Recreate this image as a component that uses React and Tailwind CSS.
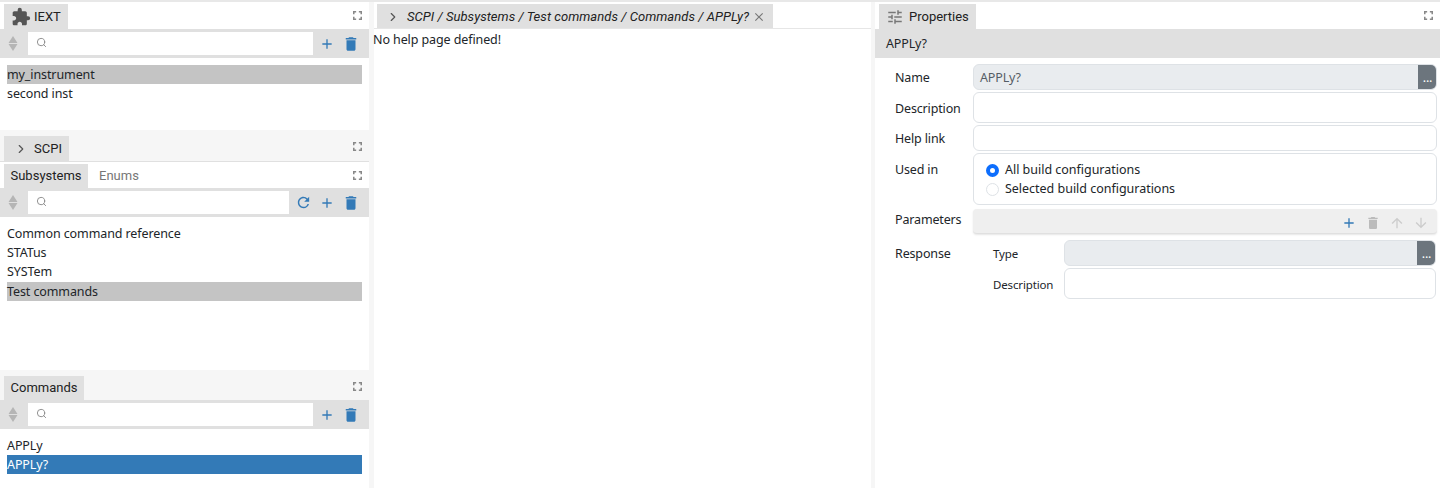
import { MdAdd, MdDelete, MdRefresh, MdTune, MdArrowUpward, MdArrowDownward, MdClose, MdExtension } from "react-icons/md";
import { LuChevronRight, LuSearch } from "react-icons/lu";

const Maximize = () => (
    <svg className="w-[9px] h-[9px] text-[#888]" viewBox="0 0 10 10" fill="none" stroke="currentColor" strokeWidth="1.7">
        <path d="M.85 3.5V.85H3.5M6.5.85h2.65V3.5M9.15 6.5v2.65H6.5M3.5 9.15H.85V6.5" />
    </svg>
);

const SortArrows = () => (
    <svg className="w-[10px] h-[15px] ml-2 mr-[10px] text-[#b5b5b5]" viewBox="0 0 10 15" fill="currentColor">
        <path d="M5 0l4.5 7H.5zM.5 8h9L5 15z" />
    </svg>
);

const Tab = ({ children, className = "" }) => (
    <div className={`flex items-center bg-[#e0e0e0] text-[13px] text-[#222] font-['Roboto',sans-serif] ${className}`}>
        {children}
    </div>
);

const Strip = ({ tab, className = "", maxClass = "" }) => (
    <div className={`flex items-end justify-between pl-1 pr-[7px] ${className}`}>
        {tab}
        <div className={`self-center ${maxClass}`}><Maximize /></div>
    </div>
);

const Toolbar = ({ refresh }) => (
    <div className="flex items-center h-[29px] bg-[#e0e0e0]">
        <SortArrows />
        <div className="flex-1 flex items-center h-[23px] bg-white pl-2 text-[#888]">
            <LuSearch className="w-[11px] h-[11px] mb-[3px]" />
        </div>
        <div className="flex items-center pl-[6px] pr-[9px] text-[#337ab7]">
            {refresh && <MdRefresh className="w-[17px] h-[17px] mr-[7px]" />}
            <MdAdd className="w-[16px] h-[16px]" />
            <MdDelete className="w-[18px] h-[18px] ml-[7px]" />
        </div>
    </div>
);

const Row = ({ children, state, className = "" }) => (
    <div className={`h-[19px] leading-[19px] whitespace-nowrap ${state === "active" ? "bg-[#337ab7] text-white" : state === "selected" ? "bg-[#c4c4c4]" : ""} ${className}`}>
        {children}
    </div>
);

const RowList = ({ items }) => (
    <div className="pl-[7px] pr-[7px] pt-[7px] tracking-[-0.1px]">
        {items.map(([label, state, cls]) => <Row key={label} state={state} className={cls}>{label}</Row>)}
    </div>
);

const Field = ({ label, labelClass, children, className = "" }) => (
    <div className={`flex ${className}`}>
        <div className={`w-[98px] shrink-0 pl-5 leading-[19px] ${labelClass}`}>{label}</div>
        <div className="flex-1 min-w-0">{children}</div>
    </div>
);

const Input = ({ className = "", children }) => (
    <div className={`border border-[#dee2e6] rounded-[6px] bg-white ${className}`}>{children}</div>
);

const Picker = ({ value, className = "" }) => (
    <div className={`flex items-stretch h-[26px] rounded-[6px] border border-[#dee2e6] bg-[#e9ecef] overflow-hidden ${className}`}>
        <div className="flex-1 px-[6px] leading-[25px] text-[#555d66]">{value}</div>
        <div className="w-[19px] -my-px -mr-px bg-[#6c757d] text-white leading-[28px] text-center">...</div>
    </div>
);

export default function App() {
    return (
        <div className="flex flex-col w-[1440px] h-[488px] overflow-hidden bg-white text-[#212529] text-[12.5px] tracking-[-0.15px] font-['Noto_Sans','Open_Sans',sans-serif]">
            <div className="h-[2px] shrink-0 bg-[#e8e8e8]" />
            <div className="flex flex-1 min-h-0">
                {/* left column */}
                <div className="flex flex-col w-[369px] shrink-0">
                    <div className="h-[128px] shrink-0">
                        <Strip className="h-[27px]" tab={
                            <Tab className="w-[64px] h-[25px] pt-px tracking-normal">
                                <MdExtension className="w-[20px] h-[20px] ml-[7px] mb-px mr-[3px] text-[#555]" />
                                IEXT
                            </Tab>
                        } />
                        <Toolbar />
                        <RowList items={[["my_instrument", "selected"], ["second inst"]]} />
                    </div>
                    <div className="flex-1 min-h-0">
                        <Strip className="h-[32px] bg-[#f6f6f6] border-b border-[#e0e0e0]" maxClass="mt-[2px]" tab={
                            <Tab className="w-[65px] h-[25px] tracking-normal">
                                <LuChevronRight className="w-[14px] h-[14px] ml-[10px] mr-[6px] text-[#555]" />
                                SCPI
                            </Tab>
                        } />
                        <Strip className="h-[26px]" tab={
                            <div className="flex h-[24px] text-[13px] tracking-normal font-['Roboto',sans-serif]">
                                <Tab className="w-[84px] justify-center">Subsystems</Tab>
                                <div className="flex items-center pl-[11px] text-[#777]">Enums</div>
                            </div>
                        } />
                        <Toolbar refresh />
                        <RowList items={[["Common command reference"], ["STATus"], ["SYSTem"], ["Test commands", "selected", "mt-px"]]} />
                    </div>
                    <div className="h-[118px] shrink-0">
                        <Strip className="h-[30px] bg-[#f6f6f6]" maxClass="mt-[2px]" tab={<Tab className="w-[80px] h-[24px] justify-center tracking-normal">Commands</Tab>} />
                        <Toolbar />
                        <RowList items={[["APPLy"], ["APPLy?", "active"]]} />
                    </div>
                </div>
                <div className="w-[5px] shrink-0 bg-[#f6f6f6]" />
                {/* middle column */}
                <div className="flex flex-col w-[497px] shrink-0">
                    <div className="flex items-end h-[27px] pl-[3px] border-b border-[#e6e6e6]">
                        <Tab className="w-[396px] h-[24px] pt-px italic tracking-[0.04px]">
                            <LuChevronRight className="w-[14px] h-[14px] ml-[9px] mr-[7px] text-[#555]" />
                            SCPI / Subsystems / Test commands / Commands / APPLy?
                            <MdClose className="w-[14px] h-[14px] ml-[3px] text-[#777]" />
                        </Tab>
                    </div>
                    <div className="pt-px leading-[19px] -ml-px tracking-[-0.1px]">No help page defined!</div>
                </div>
                <div className="w-[4px] shrink-0 bg-[#f6f6f6]" />
                {/* right column */}
                <div className="flex-1 min-w-0">
                    <Strip className="h-[27px]" tab={
                        <Tab className="w-[97px] h-[25px] pt-px tracking-normal">
                            <MdTune className="w-[18px] h-[18px] ml-[7px] mb-px mr-[5px] text-[#777]" />
                            Properties
                        </Tab>
                    } />
                    <div className="h-[29px] bg-[#e0e0e0] pl-[11px] leading-[29px]">APPLy?</div>
                    <div className="flex flex-col pt-[6px] pr-[3px]">
                        <Field label="Name" labelClass="pt-[4px]"><Picker value="APPLy?" /></Field>
                        <Field label="Description" labelClass="pt-[7px]" className="mt-[2px]"><Input className="h-[31px]" /></Field>
                        <Field label="Help link" labelClass="pt-[4px]" className="mt-[2px]"><Input className="h-[26px]" /></Field>
                        <Field label="Used in" labelClass="pt-[7px]" className="mt-[2px]">
                            <Input className="h-[52px] pl-3 pt-[6px] tracking-[-0.02px]">
                                <label className="flex items-center h-[19px] pt-px">
                                    <span className="w-[13px] h-[13px] mr-[6px] rounded-full border-[4px] border-[#0d6efd] bg-white" />
                                    All build configurations
                                </label>
                                <label className="flex items-center h-[19px] pt-px">
                                    <span className="w-[13px] h-[13px] mr-[6px] rounded-full border border-[#dee2e6] bg-white" />
                                    Selected build configurations
                                </label>
                            </Input>
                        </Field>
                        <Field label="Parameters" labelClass="pt-px" className="mt-[4px]">
                            <div className="flex items-end justify-end gap-[8px] h-[25px] pr-[8px] pb-[2px] rounded-[4px] bg-[#efefef] border-b border-[#e0e0e0] shadow-[0_1px_2px_rgba(0,0,0,0.1)]">
                                <MdAdd className="w-[16px] h-[16px] text-[#337ab7]" />
                                <MdDelete className="w-[16px] h-[16px] text-[#bbb]" />
                                <MdArrowUpward className="w-[16px] h-[16px] text-[#ccc]" />
                                <MdArrowDownward className="w-[16px] h-[16px] text-[#ccc]" />
                            </div>
                        </Field>
                        <Field label="Response" labelClass="pt-[4px]" className="mt-[6px]">
                            <div className="flex flex-col gap-[2px] pr-px">
                                <div className="flex items-center">
                                    <div className="w-[91px] pl-5 pt-[2px] text-[11.5px] shrink-0">Type</div>
                                    <Picker className="flex-1" />
                                </div>
                                <div className="flex items-center">
                                    <div className="w-[91px] pl-5 pt-[2px] text-[11.5px] shrink-0">Description</div>
                                    <Input className="flex-1 h-[31px]" />
                                </div>
                            </div>
                        </Field>
                    </div>
                </div>
            </div>
        </div>
    );
}
